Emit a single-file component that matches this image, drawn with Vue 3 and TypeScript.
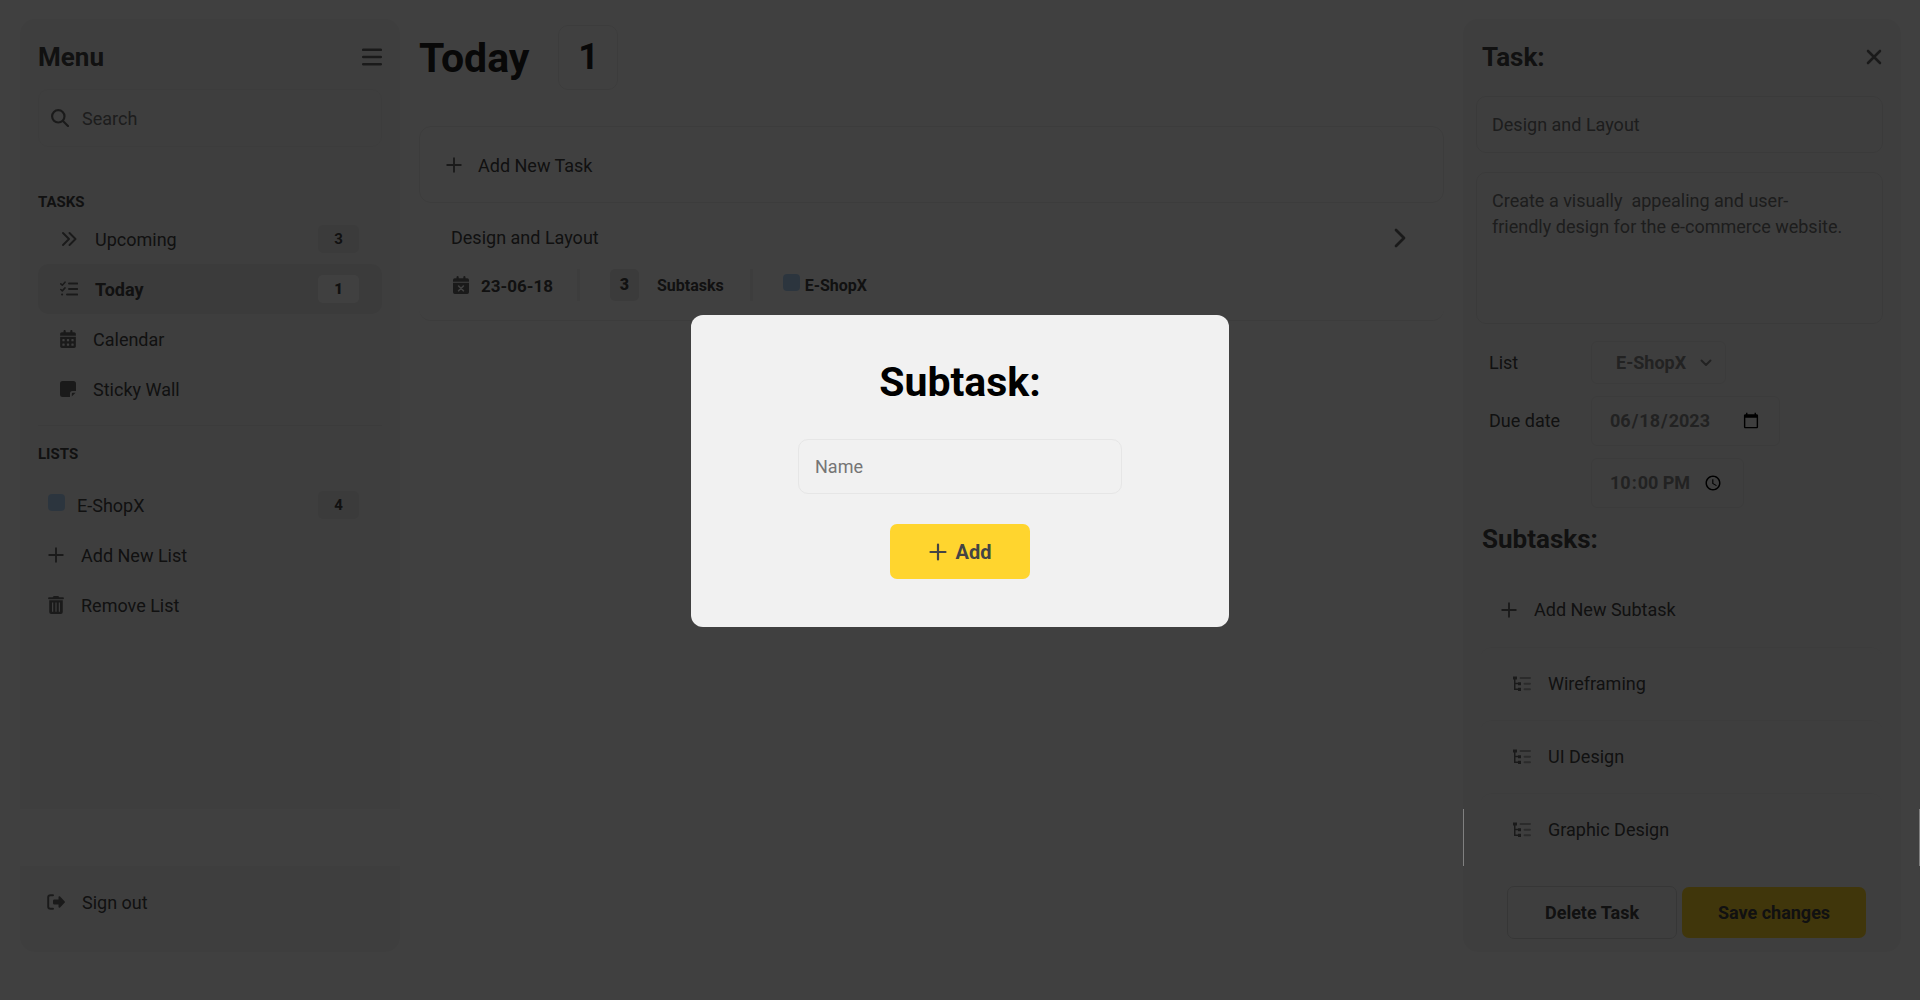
<script setup lang="ts">
import { ref } from 'vue'

interface MenuItem {
  label: string
  icon: string
  count?: number
  active?: boolean
}

const menu: MenuItem[] = [
  { label: 'Upcoming', icon: 'angles', count: 3 },
  { label: 'Today', icon: 'check', count: 1, active: true },
  { label: 'Calendar', icon: 'calendar' },
  { label: 'Sticky Wall', icon: 'note' },
]

const subtasks: string[] = ['Wireframing', 'UI Design', 'Graphic Design']

const search = ref('')
const title = ref('Design and Layout')
const description = ref('Create a visually  appealing and user-\nfriendly design for the e-commerce website.')
const list = ref('E-ShopX')
const dueDate = ref('2023-06-18')
const dueTime = ref('22:00')
const subtaskName = ref('')
</script>

<template>
  <div class="page">
    <aside class="sidebar">
      <div class="panel menu">
        <header class="panel-head">
          <h2>Menu</h2>
          <button class="plain" type="button" aria-label="Toggle menu">
            <svg width="20" height="18" viewBox="0 0 20 18" class="stroke"><path d="M1.2 1.8h17.6M1.2 9h17.6M1.2 16.2h17.6" stroke-width="2.6" /></svg>
          </button>
        </header>

        <label class="search">
          <svg width="18" height="18" viewBox="0 0 18 18" class="stroke"><circle cx="7.300" cy="7.300" r="6.200" stroke-width="2.200" /><path d="M12 12l5 5" stroke-width="2.200" /></svg>
          <input v-model="search" type="text" placeholder="Search" aria-label="Search">
        </label>

        <h3>TASKS</h3>
        <ul class="nav">
          <li v-for="item in menu" :key="item.label">
            <a href="#" :class="{ active: item.active }">
              <svg v-if="item.icon === 'angles'" width="18" height="18" viewBox="0 0 18 18" class="stroke"><path d="M3 3l6 6-6 6M9.500 3l6 6-6 6" stroke-width="2" /></svg>
              <svg v-else-if="item.icon === 'check'" width="18" height="18" viewBox="0 0 18 18" class="stroke"><path d="M.8 3.800l1.500 1.400 2.700-3M.8 9.500l1.500 1.400 2.700-3" stroke-width="1.600" /><path d="M9 3.500h8.200M9 9h8.200M7 14.500h10.200M2 14.500h.2" stroke-width="2" /></svg>
              <svg v-else-if="item.icon === 'calendar'" width="16" height="18" viewBox="0 0 448 512"><path d="M128 0c17.700 0 32 14.300 32 32V64H288V32c0-17.700 14.300-32 32-32s32 14.300 32 32V64h48c26.500 0 48 21.500 48 48v48H0V112C0 85.500 21.500 64 48 64H96V32c0-17.700 14.300-32 32-32zM0 192H448V464c0 26.500-21.500 48-48 48H48c-26.500 0-48-21.500-48-48V192zm64 80v32c0 8.800 7.200 16 16 16h32c8.800 0 16-7.200 16-16V272c0-8.800-7.200-16-16-16H80c-8.800 0-16 7.200-16 16zm128 0v32c0 8.800 7.200 16 16 16h32c8.800 0 16-7.200 16-16V272c0-8.800-7.200-16-16-16H208c-8.800 0-16 7.200-16 16zm144-16c-8.800 0-16 7.200-16 16v32c0 8.800 7.200 16 16 16h32c8.800 0 16-7.200 16-16V272c0-8.800-7.200-16-16-16H336zM64 400v32c0 8.800 7.200 16 16 16h32c8.800 0 16-7.200 16-16V400c0-8.800-7.200-16-16-16H80c-8.800 0-16 7.200-16 16zm144-16c-8.800 0-16 7.200-16 16v32c0 8.800 7.200 16 16 16h32c8.800 0 16-7.200 16-16V400c0-8.800-7.200-16-16-16H208zm112 16v32c0 8.800 7.200 16 16 16h32c8.800 0 16-7.200 16-16V400c0-8.800-7.200-16-16-16H336c-8.800 0-16 7.200-16 16z" /></svg>
              <svg v-else width="16" height="16" viewBox="0 0 16 16"><path d="M2.500 0h11A2.500 2.500 0 0 1 16 2.500V10h-3.500A2.500 2.500 0 0 0 10 12.500V16H2.500A2.500 2.500 0 0 1 0 13.500v-11A2.500 2.500 0 0 1 2.500 0zM15.600 11.800L11.800 15.600V12.800a1 1 0 0 1 1-1z" /></svg>
              <span>{{ item.label }}</span>
              <b v-if="item.count" class="count">{{ item.count }}</b>
            </a>
          </li>
        </ul>
        <hr>
        <h3>LISTS</h3>
        <ul class="nav lists">
          <li>
            <a href="#" class="list-link"><i class="swatch"></i><span>E-ShopX</span><b class="count">4</b></a>
          </li>
          <li>
            <button class="row-button" type="button">
              <svg width="16" height="16" viewBox="0 0 16 16" class="stroke"><path d="M8 1.200v13.600M1.200 8h13.600" stroke-width="1.900" /></svg>
              <span>Add New List</span>
            </button>
          </li>
          <li>
            <button class="row-button" type="button">
              <svg width="16" height="18" viewBox="0 0 16 18"><path d="M5 .7C5.200.3 5.600 0 6 0h4c.4 0 .8.300 1 .7l.3.600h3.700a.9.900 0 0 1 0 1.900H1a.9.900 0 0 1 0-1.900h3.700z" /><path fill-rule="evenodd" d="M1.200 4.300h13.600V16a2 2 0 0 1-2 2H3.200a2 2 0 0 1-2-2zM4 6.500v9.300h1.200V6.500zM7.400 6.500v9.300h1.200V6.500zM10.800 6.500v9.300H12V6.500z" /></svg>
              <span>Remove List</span>
            </button>
          </li>
        </ul>
      </div>
      <footer class="panel sign-out">
        <button class="row-button" type="button">
          <svg width="18" height="16" viewBox="0 0 18 16"><path d="M6 1.200H3.500A2.300 2.300 0 0 0 1.200 3.500v9a2.300 2.300 0 0 0 2.300 2.300H6" fill="none" stroke="currentColor" stroke-width="2" stroke-linecap="round" /><path d="M7.200 5.500h4.300V3.300c0-.9 1-1.300 1.600-.7l4.500 4.600c.5.500.5 1.100 0 1.600l-4.500 4.600c-.6.600-1.600.2-1.600-.7v-2.200H7.200a1.200 1.200 0 0 1-1.200-1.200V6.700a1.200 1.200 0 0 1 1.200-1.200z" /></svg>
          <span>Sign out</span>
        </button>
      </footer>
    </aside>

    <main>
      <header class="main-head">
        <h1>Today</h1>
        <b>1</b>
      </header>
      <button class="add-task" type="button">
        <svg width="16" height="16" viewBox="0 0 16 16" class="stroke"><path d="M8 1.200v13.600M1.200 8h13.600" stroke-width="1.900" /></svg>
        <span>Add New Task</span>
      </button>
      <article class="task">
        <div class="task-title">
          <span>Design and Layout</span>
          <button class="plain" type="button" aria-label="Open task">
            <svg width="12" height="20" viewBox="0 0 12 20" class="stroke"><path d="M2 2l8 8-8 8" stroke-width="2.800" /></svg>
          </button>
        </div>
        <div class="meta">
          <div class="meta-date">
            <svg width="16" height="18" viewBox="0 0 16 18"><path d="M3.500 1.200a1.100 1.100 0 0 1 2.200 0V2.300h4.600V1.200a1.100 1.100 0 0 1 2.200 0V2.300h1.800A1.700 1.700 0 0 1 16 4v1.700H0V4a1.700 1.700 0 0 1 1.700-1.700h1.800zM0 6.800h16v9.500a1.700 1.700 0 0 1-1.700 1.700H1.700A1.700 1.700 0 0 1 0 16.300z" /><path d="M5.600 10l4.800 4.800M10.400 10l-4.800 4.800" fill="none" stroke="#fff" stroke-width="1.600" stroke-linecap="round" /></svg>
            <span>23-06-18</span>
          </div>
          <div class="meta-sub"><b>3</b><span>Subtasks</span></div>
          <div class="meta-list"><i class="swatch"></i><span>E-ShopX</span></div>
        </div>
      </article>
    </main>

    <aside class="panel details">
      <header class="panel-head">
        <h2>Task:</h2>
        <button class="plain" type="button" aria-label="Close task">
          <svg width="16" height="16" viewBox="0 0 16 16" class="stroke"><path d="M2 2l12 12M14 2L2 14" stroke-width="2.600" /></svg>
        </button>
      </header>
      <input v-model="title" class="box title-input" type="text" aria-label="Task title">
      <textarea v-model="description" class="box" aria-label="Description"></textarea>
      <div class="fields">
        <label for="list">List</label>
        <div class="select-wrap">
          <select id="list" v-model="list" class="box list"><option>E-ShopX</option></select>
          <svg width="12" height="8" viewBox="0 0 12 8" class="stroke"><path d="M1.500 1.500L6 6l4.500-4.500" stroke-width="2" /></svg>
        </div>
        <label for="due">Due date</label>
        <input id="due" v-model="dueDate" class="box date" type="date">
        <input v-model="dueTime" class="box time" type="time" aria-label="Due time">
      </div>
      <h2 class="sub-title">Subtasks:</h2>
      <button class="add-sub" type="button">
        <svg width="16" height="16" viewBox="0 0 16 16" class="stroke"><path d="M8 1.200v13.600M1.200 8h13.600" stroke-width="1.900" /></svg>
        <span>Add New Subtask</span>
      </button>
      <ul class="subtasks">
        <li v-for="name in subtasks" :key="name">
          <svg width="18" height="16" viewBox="0 0 18 16"><path d="M0 .5h4v3H2.500v3.300H5V6.200h3v3H5v-.900H2.500v4.300H5v-.800h3v3.200H5v-.900H1V3.500H0z" /><path d="M7.500 2h9.500M11.500 7.700H17M11.500 13.300H17" class="faint" /></svg>
          <span>{{ name }}</span>
        </li>
      </ul>
      <div class="actions">
        <button class="delete" type="button">Delete Task</button>
        <button class="save" type="button">Save changes</button>
      </div>
      <div class="edge"></div>
    </aside>

    <div class="overlay">
      <form class="modal" role="dialog" aria-labelledby="dialog-title" @submit.prevent>
        <h1 id="dialog-title">Subtask:</h1>
        <input v-model="subtaskName" class="box" type="text" placeholder="Name" aria-label="Name">
        <button type="submit">
          <svg width="18" height="18" viewBox="0 0 18 18" class="stroke"><path d="M9 1.500v15M1.500 9h15" stroke-width="2.200" /></svg>
          <span>Add</span>
        </button>
      </form>
    </div>
  </div>
</template>

<style>
body {
  margin: 0;
  background: #fff;
}
</style>

<style scoped>
* {
  box-sizing: border-box;
}
.page {
  display: grid;
  grid-template-columns: 380px 1fr 438px;
  gap: 19px;
  min-height: 100vh;
  padding: 19px 19px 48px 20px;
  font-family: Roboto, "Liberation Sans", sans-serif;
  font-size: 18px;
  line-height: 26px;
  color: #444;
}
h1, h2, h3, ul {
  margin: 0;
  padding: 0;
}
ul {
  list-style: none;
}
a {
  color: inherit;
  text-decoration: none;
}
button, input, textarea, select {
  font: inherit;
  color: inherit;
}
button {
  padding: 0;
  border: 0;
  background: none;
}
svg {
  flex: none;
  color: #6a6a6a;
  fill: currentColor;
}
.stroke {
  fill: none;
  stroke: currentColor;
  stroke-linecap: round;
  stroke-linejoin: round;
}
.plain {
  display: flex;
}
.nav span, .row-button span, .add-task span, .meta span {
  padding-top: 2px;
}
.panel {
  background: #f7f7f7;
  border-radius: 15px;
}
.sidebar {
  display: flex;
  flex-direction: column;
  gap: 57px;
}
.menu {
  flex: 1;
  padding: 0 18px 40px;
  border-radius: 15px 15px 0 0;
}
.sign-out {
  height: 86px;
  padding: 11px 17px 0;
  border-radius: 0 0 15px 15px;
}
.panel-head {
  display: flex;
  align-items: center;
  justify-content: space-between;
  height: 70px;
  padding-top: 6px;
}
h2 {
  font-size: 26px;
  line-height: 36px;
}
h3 {
  font-size: 15px;
  line-height: 24px;
}
.search {
  display: flex;
  align-items: center;
  gap: 13px;
  height: 58px;
  margin-bottom: 43px;
  padding: 0 12px;
  border: 1px solid #efefef;
  border-radius: 10px;
}
.search input {
  flex: 1;
  min-width: 0;
  padding: 2px 0 0;
  border: 0;
  outline: 0;
  background: none;
}
input::placeholder {
  color: #757575;
  opacity: 1;
}
.nav a, .row-button {
  display: flex;
  align-items: center;
  width: 100%;
  height: 50px;
  border-radius: 10px;
}
.nav a {
  gap: 17px;
  padding: 0 23px 0 22px;
}
.nav .active {
  background: #ebebeb;
  font-weight: 700;
}
.nav .active .count {
  background: #fff;
}
.count {
  width: 41px;
  margin-left: auto;
  border-radius: 5px;
  background: #ebebeb;
  font-size: 15px;
  line-height: 28px;
  text-align: center;
}
hr {
  height: 1px;
  margin: 11px 0 16px;
  border: 0;
  background: #ebebeb;
}
.lists {
  margin-top: 14px;
}
.nav .list-link {
  gap: 12px;
  padding-left: 10px;
}
.row-button {
  gap: 17px;
  padding-left: 10px;
  text-align: left;
}
.swatch {
  width: 17px;
  height: 17px;
  margin-bottom: 5px;
  border-radius: 4px;
  background: #b0d4f8;
}
.main-head {
  display: flex;
  align-items: center;
  gap: 29px;
  padding-top: 6px;
  margin-bottom: 36px;
  color: #222;
}
h1 {
  font-size: 41px;
  line-height: 52px;
}
.main-head b {
  width: 60px;
  border: 1px solid #efefef;
  border-radius: 10px;
  font-size: 36px;
  line-height: 63px;
  text-align: center;
}
.add-task {
  display: flex;
  align-items: center;
  gap: 16px;
  width: 100%;
  height: 77px;
  padding: 0 26px;
  border: 1px solid #efefef;
  border-radius: 12px;
}
.task {
  padding: 22px 38px 19px 32px;
  border-bottom: 1px solid #efefef;
  border-radius: 12px;
}
.task-title {
  display: flex;
  align-items: center;
  justify-content: space-between;
  margin-bottom: 18px;
}
.meta {
  display: flex;
  font-size: 16px;
  font-weight: 700;
  line-height: 32px;
}
.meta > div {
  display: flex;
  align-items: center;
  height: 32px;
  padding-left: 30px;
}
.meta > div + div {
  border-left: 3px solid #f3f3f3;
}
.meta > .meta-date {
  gap: 12px;
  padding: 0 24px 0 2px;
  font-size: 17px;
}
.meta-sub {
  gap: 18px;
  padding-right: 26px;
}
.meta-sub b {
  width: 29px;
  border-radius: 5px;
  background: #ebebeb;
  text-align: center;
}
.meta-list {
  gap: 5px;
}
.details {
  position: relative;
  padding: 0 18px 13px 13px;
}
.details .panel-head {
  padding: 6px 1px 0 6px;
}
.box {
  display: block;
  border: 1px solid #e6e6e6;
  border-radius: 10px;
  outline: 0;
  background: none;
  color: #757575;
}
.title-input {
  width: 100%;
  height: 57px;
  margin-top: 7px;
  padding: 0 15px;
}
textarea {
  width: 100%;
  height: 152px;
  margin: 19px 0 17px;
  padding: 15px;
  resize: none;
}
.fields {
  display: grid;
  grid-template-columns: 102px 1fr;
  gap: 12px 0;
  align-items: center;
  justify-items: start;
  padding-left: 13px;
}
.select-wrap {
  position: relative;
}
.select-wrap svg {
  position: absolute;
  top: 18px;
  right: 14px;
  color: #888;
}
.fields .box {
  height: 50px;
  padding: 0 17px;
  border-color: #ebebeb;
  border-radius: 6px;
  font-weight: 700;
  color: #888;
}
.fields .list {
  width: 135px;
  height: 43px;
  padding: 0 20px;
  appearance: none;
  text-indent: 4px;
}
.fields .date {
  width: 189px;
}
.fields .time {
  grid-column: 2;
  width: 153px;
}
.sub-title {
  margin: 13px 0 0 6px;
}
.add-sub {
  display: flex;
  align-items: center;
  gap: 17px;
  width: 100%;
  height: 75px;
  margin-top: 15px;
  padding-left: 25px;
}
.subtasks {
  margin: 0 0 20px 4px;
}
.subtasks li {
  display: flex;
  align-items: center;
  gap: 17px;
  height: 73px;
  padding-left: 33px;
  border-top: 1px solid #f0f0f0;
  border-radius: 12px;
}
.faint {
  fill: none;
  stroke: #aaa;
  stroke-width: 2;
  stroke-linecap: round;
}
.actions {
  display: flex;
  align-items: center;
  justify-content: center;
  gap: 5px;
  padding-left: 14px;
}
.actions button {
  height: 51px;
  border-radius: 7px;
  font-weight: 700;
}
.actions .delete {
  width: 170px;
  height: 53px;
  border: 1px solid #d8d8d8;
}
.save {
  width: 184px;
  background: #ffd52e;
}
.edge {
  position: absolute;
  z-index: 20;
  right: -19px;
  bottom: 86px;
  left: 0;
  height: 57px;
  border: solid #808080;
  border-width: 0 1px;
  pointer-events: none;
}
.overlay {
  position: fixed;
  z-index: 10;
  inset: 0;
  display: flex;
  align-items: flex-start;
  justify-content: center;
  padding-top: 315px;
  background: rgba(0, 0, 0, 0.75);
}
.modal {
  display: flex;
  flex-direction: column;
  align-items: center;
  width: 538px;
  padding: 41px 40px 48px;
  border-radius: 12px;
  background: #f1f1f1;
}
.modal h1 {
  margin-bottom: 31px;
  color: #000;
}
.modal input {
  width: 324px;
  height: 55px;
  margin-bottom: 30px;
  padding: 0 16px;
  border-color: #e6e6e6;
}
.modal button {
  display: flex;
  align-items: center;
  justify-content: center;
  gap: 9px;
  width: 140px;
  height: 55px;
  border-radius: 7px;
  background: #ffd52e;
  font-size: 20px;
  font-weight: 700;
}
.modal svg {
  color: #444;
}
</style>
